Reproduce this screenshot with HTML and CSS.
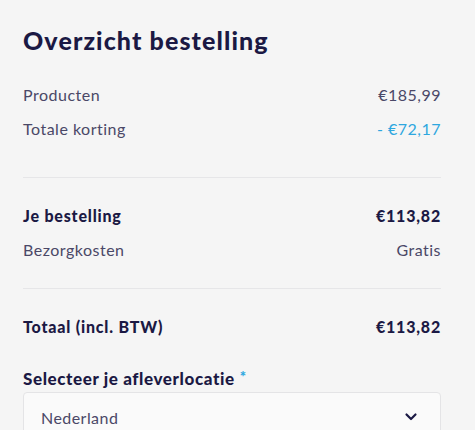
FILE: index.html
```html
<!DOCTYPE html>
<html lang="nl">
<head>
<meta charset="utf-8">
<link rel="stylesheet" href="styles.css">
</head>
<body>
<div class="summary">
  <h1 class="title">Overzicht bestelling</h1>
  <div class="group first">
    <div class="row"><span>Producten</span><span>€185,99</span></div>
    <div class="row"><span>Totale korting</span><span class="discount">- €72,17</span></div>
  </div>
  <div class="group mid">
    <div class="row strong"><span>Je bestelling</span><span>€113,82</span></div>
    <div class="row"><span>Bezorgkosten</span><span>Gratis</span></div>
  </div>
  <div class="group last">
    <div class="row strong"><span>Totaal (incl. BTW)</span><span>€113,82</span></div>
  </div>
  <div class="field-label"><span>Selecteer je afleverlocatie</span><span class="req">*</span></div>
  <div class="select">
    <span>Nederland</span>
    <svg class="chev" width="14" height="10" viewBox="0 0 14 10"><path d="M2.5 2.5 L7 7 L11.5 2.5" fill="none" stroke="#1b1944" stroke-width="2.2" stroke-linecap="round" stroke-linejoin="round"/></svg>
  </div>
</div>
</body>
</html>
```
FILE: styles.css
```css
html, body {
  margin: 0;
  padding: 0;
  background: #f5f5f5;
}
body {
  font-family: "Lato", "Noto Sans", sans-serif;
  color: #4a4867;
  width: 475px;
  height: 430px;
  overflow: hidden;
}
.summary {
  width: 418px;
  padding: 25px 0 0 23px;
}
.title {
  margin: 0;
  font-size: 25px;
  line-height: 30px;
  font-weight: 900;
  color: #1b1944;
  letter-spacing: 1.1px;
}
.row {
  display: flex;
  justify-content: space-between;
  font-size: 16px;
  line-height: 24px;
  height: 24px;
  letter-spacing: 0.5px;
}
.group {
  display: flex;
  flex-direction: column;
  gap: 10px;
}
.group.first {
  padding: 28px 0 36px;
  border-bottom: 1px solid #e6e6e8;
}
.group.mid {
  padding: 26px 0 26px;
  border-bottom: 1px solid #e6e6e8;
}
.group.last {
  padding: 26px 0 0;
}
.row.strong {
  font-weight: 900;
  color: #1b1944;
  letter-spacing: 0.8px;
}
.discount {
  color: #2ea7df;
}
.field-label {
  display: flex;
  align-items: flex-start;
  gap: 5px;
  margin-top: 27px;
  font-size: 17px;
  line-height: 25px;
  font-weight: 900;
  color: #1b1944;
  letter-spacing: 0.6px;
}
.req {
  color: #2ea7df;
  font-size: 15px;
  line-height: 20px;
}
.select {
  margin-top: 1px;
  box-sizing: border-box;
  height: 50px;
  background: #fafafa;
  border: 1px solid #e4e4e6;
  border-radius: 4px;
  display: flex;
  align-items: center;
  justify-content: space-between;
  padding: 0 22px 0 17px;
  font-size: 16px;
  letter-spacing: 0.45px;
  color: #4a4867;
}
.chev {
  display: block;
}
```
